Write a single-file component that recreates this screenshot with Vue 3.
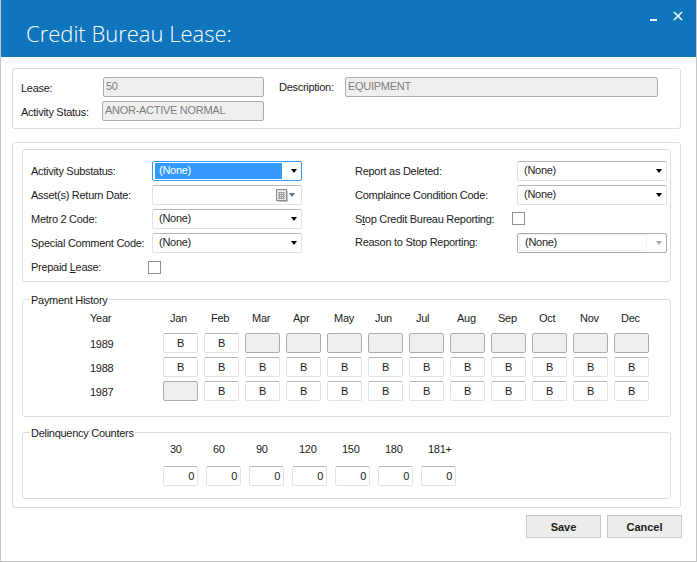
<script setup>
const months = ['Jan', 'Feb', 'Mar', 'Apr', 'May', 'Jun', 'Jul', 'Aug', 'Sep', 'Oct', 'Nov', 'Dec']

const history = [
  { year: '1989', cells: ['B', 'B', '', '', '', '', '', '', '', '', '', ''] },
  { year: '1988', cells: Array(12).fill('B') },
  { year: '1987', cells: ['', ...Array(11).fill('B')] },
]

const counters = ['30', '60', '90', '120', '150', '180', '181+']
</script>

<template>
  <div class="window">
    <header class="titlebar">
      <h1 class="title">Credit Bureau Lease:</h1>
      <div class="win-btns">
        <svg width="8" height="3" viewBox="0 0 8 3"><rect width="7" height="2" y="1" fill="#fff" /></svg>
        <svg width="10" height="10" viewBox="0 0 10 10"><path d="M1 1l8 8M9 1l-8 8" stroke="#fff" stroke-width="1.5" fill="none" /></svg>
      </div>
    </header>

    <div class="body">
      <section class="panel top-panel">
        <div class="top-row">
          <label class="lease-label">Lease:</label>
          <div class="field disabled lease-field">50</div>
          <label class="desc-label">Description:</label>
          <div class="field disabled desc-field">EQUIPMENT</div>
        </div>
        <div class="top-row status-row">
          <label class="status-label">Activity Status:</label>
          <div class="field disabled status-field">ANOR-ACTIVE NORMAL</div>
        </div>
      </section>

      <section class="panel main-panel">
        <div class="group form-group">
          <div class="form-col left-col">
            <div class="form-row">
              <label>Activity Substatus:</label>
              <div class="combo focused">
                <span class="selection">(None)</span>
                <span class="arrow"></span>
              </div>
            </div>
            <div class="form-row">
              <label>Asset(s) Return Date:</label>
              <div class="combo">
                <svg class="cal" width="12" height="13" viewBox="0 0 12 13">
                  <rect x="0.5" y="0.5" width="10" height="11" fill="#e8e8e8" stroke="#8a8a8a" />
                  <path d="M2 3.5h7M2 5.5h7M2 7.5h7M2 9.5h7M3.5 3v7M5.5 3v7M7.5 3v7" stroke="#a2a2a2" fill="none" />
                  <path d="M11.5 2v10.5H2" stroke="#c4c4c4" fill="none" />
                </svg>
                <span class="arrow blue"></span>
              </div>
            </div>
            <div class="form-row">
              <label>Metro 2 Code:</label>
              <div class="combo"><span class="value">(None)</span><span class="arrow"></span></div>
            </div>
            <div class="form-row">
              <label>Special Comment Code:</label>
              <div class="combo"><span class="value">(None)</span><span class="arrow"></span></div>
            </div>
            <div class="form-row">
              <label>Prepaid <u>L</u>ease:</label>
              <span class="check left-check"></span>
            </div>
          </div>

          <div class="form-col right-col">
            <div class="form-row">
              <label>Report as Deleted:</label>
              <div class="combo"><span class="value">(None)</span><span class="arrow"></span></div>
            </div>
            <div class="form-row">
              <label>Complaince Condition Code:</label>
              <div class="combo"><span class="value">(None)</span><span class="arrow"></span></div>
            </div>
            <div class="form-row">
              <label>S<u>t</u>op Credit Bureau Reporting:</label>
              <span class="check right-check"></span>
            </div>
            <div class="form-row">
              <label class="reason-label">Reason to Stop Reporting:</label>
              <div class="combo off">
                <span class="value inner">(None)</span>
                <span class="arrow grey"></span>
              </div>
            </div>
          </div>
        </div>

        <div class="group history-group">
          <span class="legend">Payment History</span>
          <div class="history-grid">
            <span class="year-cell head">Year</span>
            <span v-for="m in months" :key="m" class="month">{{ m }}</span>
            <template v-for="row in history" :key="row.year">
              <span class="year-cell">{{ row.year }}</span>
              <div
                v-for="(c, i) in row.cells"
                :key="i"
                class="cell"
                :class="{ disabled: !c }"
              >{{ c }}</div>
            </template>
          </div>
        </div>

        <div class="group counter-group">
          <span class="legend">Delinquency Counters</span>
          <div class="counter-grid">
            <span v-for="c in counters" :key="c" class="counter-head">{{ c }}</span>
            <div v-for="c in counters" :key="'v' + c" class="cell counter">0</div>
          </div>
        </div>
      </section>

      <div class="actions">
        <button class="btn">Save</button>
        <button class="btn">Cancel</button>
      </div>
    </div>
  </div>
</template>

<style>
html, body { margin: 0; background: #fff; }
</style>

<style scoped>
.window {
  width: 697px;
  height: 562px;
  box-sizing: border-box;
  border: 1px solid #c6c6c6;
  border-top: none;
  background: #fff;
  font-family: "Liberation Sans", Arial, sans-serif;
  font-size: 11px;
  letter-spacing: -0.28px;
  color: #1c1c1c;
  overflow: hidden;
}
.titlebar {
  height: 57px;
  margin: 0 -1px;
  background: #0f75bc;
  display: flex;
  justify-content: space-between;
  position: relative;
}
.title {
  margin: 0;
  padding: 18px 0 0 26px;
  font-family: "Open Sans", sans-serif;
  font-weight: 300;
  font-size: 22px;
  letter-spacing: 0;
  line-height: 31px;
  color: #fff;
}
.win-btns {
  display: flex;
  gap: 15px;
  padding: 11px 14px 0 0;
  align-items: flex-start;
}
.win-btns svg:first-child { margin-top: 7px; }
.body { padding: 11px 15px 0 11px; }
.panel {
  border: 1px solid #d5dfe6;
  border-radius: 3px;
  box-sizing: border-box;
}
.top-panel { height: 61px; padding-top: 8px; }
.top-row { display: flex; align-items: center; height: 20px; }
.status-row { margin-top: 4px; }
.lease-label { width: 82px; margin-left: 8px; padding-top: 2px; }
.status-label { width: 81px; margin-left: 8px; padding-top: 2px; }
.desc-label { width: 66px; margin-left: 15px; }
.field {
  box-sizing: border-box;
  height: 20px;
  line-height: 17px;
  padding-left: 2px;
}
.disabled {
  background: #efefef;
  border: 1px solid #acacac;
  border-radius: 2px;
  color: #7d7d7d;
}
.lease-field { width: 161px; }
.status-field { width: 162px; }
.desc-field { width: 313px; }

.main-panel {
  height: 366px;
  margin-top: 13px;
  padding: 6px 9px 0;
}
.group {
  border: 1px solid #d5dfe6;
  border-radius: 3px;
  position: relative;
}
.form-group {
  height: 133px;
  box-sizing: border-box;
  padding: 11px 3px 0 8px;
  display: flex;
  justify-content: space-between;
}
.form-col { display: flex; flex-direction: column; gap: 4px; }
.form-row { display: flex; align-items: center; height: 20px; }
.left-col label { width: 121px; }
.right-col label { width: 162px; }
.reason-label { margin-top: -2px; }
.combo {
  box-sizing: border-box;
  width: 150px;
  height: 20px;
  border: 1px solid #dfe3e8;
  border-top-color: #b4b7bb;
  border-radius: 2px;
  display: flex;
  align-items: center;
  justify-content: flex-end;
  position: relative;
  color: #222;
}
.value { position: absolute; left: 6px; top: 1px; line-height: 15px; }
.combo.focused { border: 1px solid #3399ff; }
.selection {
  position: absolute;
  left: 2px;
  top: 1px;
  width: 127px;
  height: 16px;
  line-height: 15px;
  padding-left: 4px;
  box-sizing: border-box;
  background: #3399ff;
  color: #fff;
}
.combo.off { border: 1px solid #acacac; }
.value.inner {
  left: 1px;
  top: 0;
  width: 128px;
  height: 17px;
  box-sizing: border-box;
  padding-left: 5px;
  border: 1px solid #f0f0f0;
}
.arrow {
  width: 0;
  height: 0;
  border-left: 3.5px solid transparent;
  border-right: 3.5px solid transparent;
  border-top: 4px solid #000;
  margin-right: 4px;
}
.arrow.blue { border-top-color: #5f7796; margin: 0 6px 0 1px; }
.arrow.grey { border-top-color: #a8a8a8; }
.check {
  width: 13px;
  height: 13px;
  border: 1px solid #8f8f8f;
  box-sizing: border-box;
  background: #fff;
}
.left-check { margin-left: -4px; }
.right-check { margin-left: -5px; margin-top: -2px; }

.history-group { height: 118px; margin-top: 17px; box-sizing: border-box; }
.legend {
  position: absolute;
  left: 7px;
  top: -6px;
  padding: 0 1px;
  background: #fff;
  line-height: 13px;
}
.history-grid {
  display: grid;
  grid-template-columns: 134px repeat(12, 35px);
  column-gap: 6px;
  row-gap: 4px;
  grid-template-rows: 19px repeat(3, 20px);
  padding-top: 10px;
}
.year-cell { padding-left: 67px; line-height: 22px; }
.year-cell.head { line-height: 17px; }
.month { padding-left: 7px; line-height: 17px; }
.cell {
  box-sizing: border-box;
  height: 20px;
  line-height: 19px;
  text-align: center;
  border: 1px solid #dfe3e8;
  border-top-color: #b4b7bb;
  border-radius: 2px;
}
.cell.disabled { border: 1px solid #acacac; }

.counter-group { height: 67px; margin-top: 15px; box-sizing: border-box; }
.counter-grid {
  display: grid;
  grid-template-columns: repeat(7, 35px);
  column-gap: 8px;
  row-gap: 9px;
  grid-template-rows: 15px 20px;
  padding: 9px 0 0 140px;
}
.counter-head { padding-left: 7px; line-height: 15px; }
.counter { text-align: right; padding-right: 3px; }

.actions {
  display: flex;
  justify-content: flex-end;
  gap: 6px;
  margin: 7px -1px 0 0;
}
.btn {
  width: 75px;
  height: 23px;
  padding: 0;
  box-sizing: border-box;
  border: 1px solid #c9c9c9;
  background: #ededed;
  font: bold 11px "Liberation Sans", Arial, sans-serif;
  color: #1c1c1c;
}
</style>
